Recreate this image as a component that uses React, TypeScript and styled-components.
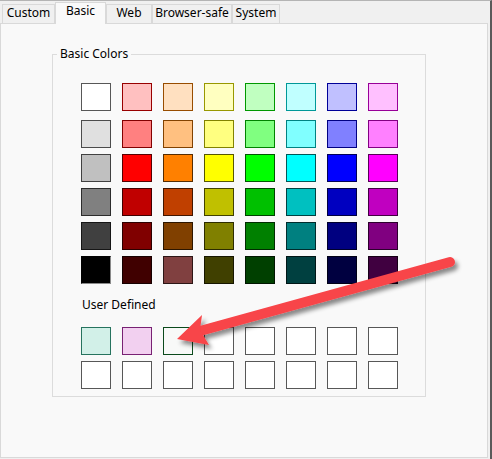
import React from 'react';
import styled, { createGlobalStyle } from 'styled-components';

const Global = createGlobalStyle`
  html, body { margin: 0; padding: 0; background: #f0f0f0; }
  body {
    font-family: "Noto Sans", "DejaVu Sans", sans-serif;
    font-size: 12px;
    color: #000;
  }
`;

const BASIC: string[][] = [
  ['#FFFFFF', '#FFC0C0', '#FFE0C0', '#FFFFC0', '#C0FFC0', '#C0FFFF', '#C0C0FF', '#FFC0FF'],
  ['#E0E0E0', '#FF8080', '#FFC080', '#FFFF80', '#80FF80', '#80FFFF', '#8080FF', '#FF80FF'],
  ['#C0C0C0', '#FF0000', '#FF8000', '#FFFF00', '#00FF00', '#00FFFF', '#0000FF', '#FF00FF'],
  ['#808080', '#C00000', '#C04000', '#C0C000', '#00C000', '#00C0C0', '#0000C0', '#C000C0'],
  ['#404040', '#800000', '#804000', '#808000', '#008000', '#008080', '#000080', '#800080'],
  ['#000000', '#400000', '#804040', '#404000', '#004000', '#004040', '#000040', '#400040'],
];

type UserSwatch = { fill: string; border?: string };
const USER: UserSwatch[][] = [
  [
    { fill: '#D2F0E8' },
    { fill: '#F2D0F0' },
    { fill: '#F8F9F8', border: '#0B4A1C' },
    { fill: '#FFFFFF' },
    { fill: '#FFFFFF' },
    { fill: '#FFFFFF' },
    { fill: '#FFFFFF' },
    { fill: '#FFFFFF' },
  ],
  Array.from({ length: 8 }, () => ({ fill: '#FFFFFF' })),
];

function darken(hex: string): string {
  const r = parseInt(hex.slice(1, 3), 16) / 255;
  const g = parseInt(hex.slice(3, 5), 16) / 255;
  const b = parseInt(hex.slice(5, 7), 16) / 255;
  const max = Math.max(r, g, b);
  const min = Math.min(r, g, b);
  let h = 0;
  let s = 0;
  const l = (max + min) / 2;
  if (max !== min) {
    const d = max - min;
    s = l > 0.5 ? d / (2 - max - min) : d / (max + min);
    if (max === r) h = (g - b) / d + (g < b ? 6 : 0);
    else if (max === g) h = (b - r) / d + 2;
    else h = (r - g) / d + 4;
    h /= 6;
  }
  const nl = l * 0.34;
  const hue2rgb = (p: number, q: number, t: number) => {
    if (t < 0) t += 1;
    if (t > 1) t -= 1;
    if (t < 1 / 6) return p + (q - p) * 6 * t;
    if (t < 1 / 2) return q;
    if (t < 2 / 3) return p + (q - p) * (2 / 3 - t) * 6;
    return p;
  };
  let rr: number, gg: number, bb: number;
  if (s === 0) {
    rr = gg = bb = nl;
  } else {
    const q = nl < 0.5 ? nl * (1 + s) : nl + s - nl * s;
    const p = 2 * nl - q;
    rr = hue2rgb(p, q, h + 1 / 3);
    gg = hue2rgb(p, q, h);
    bb = hue2rgb(p, q, h - 1 / 3);
  }
  const toHex = (v: number) => Math.round(v * 255).toString(16).padStart(2, '0');
  return `#${toHex(rr)}${toHex(gg)}${toHex(bb)}`;
}

const Window = styled.div`
  position: relative;
  width: 492px;
  height: 459px;
  box-sizing: border-box;
  border-top: 1px solid #b4b4b4;
  border-right: 2px solid #5a5a5a;
  padding-right: 2px;
  background: #f0f0f0;
  display: flex;
  flex-direction: column;
  overflow: hidden;
`;

const TabBar = styled.div`
  display: flex;
  align-items: flex-end;
  height: 22px;
  padding-left: 2px;
  position: relative;
  z-index: 1;
`;

const Tab = styled.div<{ $w: number; $active?: boolean }>`
  box-sizing: border-box;
  width: ${(p) => p.$w}px;
  height: ${(p) => (p.$active ? 22 : 19)}px;
  margin-bottom: ${(p) => (p.$active ? -1 : 0)}px;
  border: 1px solid #d9d9d9;
  border-bottom: none;
  background: ${(p) => (p.$active ? '#f9f9f9' : '#f0f0f0')};
  line-height: 16px;
  text-align: center;
  white-space: nowrap;
  cursor: default;
`;

const Panel = styled.div`
  box-sizing: border-box;
  width: 488px;
  height: 435px;
  border: 1px solid #d9d9d9;
  background: #f9f9f9;
`;

const GroupBox = styled.fieldset`
  box-sizing: border-box;
  width: 374px;
  margin: 23px 0 0 51px;
  padding: 21px 0 7px 0;
  border: 1px solid #dcdcdc;
  min-width: 0;
`;

const Legend = styled.legend`
  padding: 0 3px 2px;
  margin-left: 4px;
  line-height: 13px;
`;

const GroupContent = styled.div`
  padding-left: 28px;
`;

const Rows = styled.div`
  display: flex;
  flex-direction: column;
  gap: 6px;
`;

const SwatchRow = styled.div<{ $extra?: boolean }>`
  display: flex;
  gap: 11px;
  margin-bottom: ${(p) => (p.$extra ? 3 : 0)}px;
`;

const Swatch = styled.div<{ $fill: string; $border: string; $black?: boolean }>`
  box-sizing: border-box;
  width: 30px;
  height: 28px;
  background: ${(p) => p.$fill};
  border: 1px solid ${(p) => p.$border};
  ${(p) => (p.$black ? 'border-right-color: #8a8a8a; border-bottom-color: #8a8a8a;' : '')}
`;

const SectionLabel = styled.div`
  line-height: 16px;
  margin: 13px 0 14px 1px;
`;

const ArrowLayer = styled.svg`
  position: absolute;
  left: 0;
  top: -1px;
  width: 492px;
  height: 459px;
  pointer-events: none;
`;

const tabs = [
  { label: 'Custom', w: 53 },
  { label: 'Basic', w: 51, active: true },
  { label: 'Web', w: 46 },
  { label: 'Browser-safe', w: 80 },
  { label: 'System', w: 48 },
];

export default function App() {
  return (
    <>
      <Global />
      <Window>
        <TabBar>
          {tabs.map((t) => (
            <Tab key={t.label} $w={t.w} $active={t.active}>
              {t.label}
            </Tab>
          ))}
        </TabBar>
        <Panel>
          <GroupBox>
            <Legend>Basic Colors</Legend>
            <GroupContent>
              <Rows>
                {BASIC.map((row, i) => (
                  <SwatchRow key={i} $extra={i === 0}>
                    {row.map((c, j) => (
                      <Swatch key={j} $fill={c} $border={darken(c)} $black={c === '#000000'} />
                    ))}
                  </SwatchRow>
                ))}
              </Rows>
              <SectionLabel>User Defined</SectionLabel>
              <Rows>
                {USER.map((row, i) => (
                  <SwatchRow key={i}>
                    {row.map((s, j) => (
                      <Swatch key={j} $fill={s.fill} $border={s.border ?? darken(s.fill)} />
                    ))}
                  </SwatchRow>
                ))}
              </Rows>
            </GroupContent>
          </GroupBox>
        </Panel>
        <ArrowLayer viewBox="0 0 492 459">
          <defs>
            <filter id="shadow" x="-10%" y="-30%" width="130%" height="180%">
              <feDropShadow dx="3" dy="4" stdDeviation="2.2" floodColor="#000" floodOpacity="0.45" />
            </filter>
          </defs>
          <g filter="url(#shadow)">
            <line x1="200" y1="331" x2="450" y2="262" stroke="#f84448" strokeWidth="10" strokeLinecap="round" />
            <path d="M177 339 L202 315 L200 330 L209 345 Z" fill="#f84448" />
          </g>
        </ArrowLayer>
      </Window>
    </>
  );
}
